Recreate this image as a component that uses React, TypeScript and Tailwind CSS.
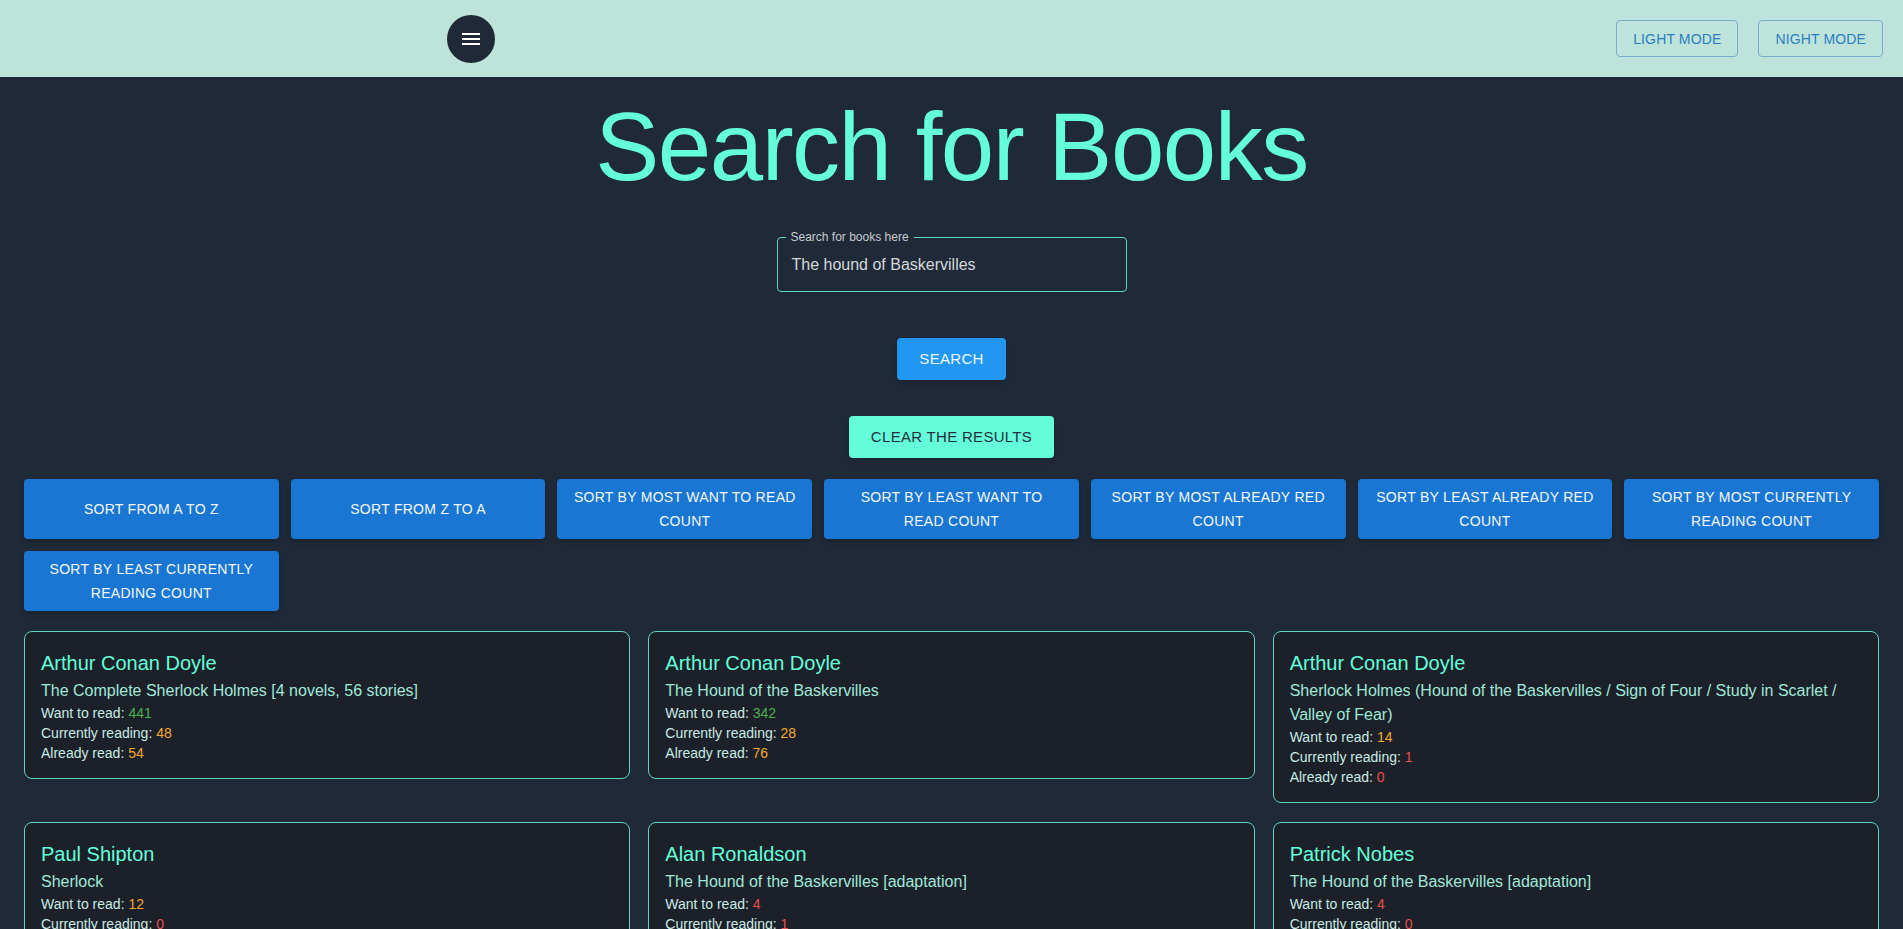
const books = [
  {
    author: "Arthur Conan Doyle",
    title: "The Complete Sherlock Holmes [4 novels, 56 stories]",
    want: 441,
    current: 48,
    read: 54
  },
  {
    author: "Arthur Conan Doyle",
    title: "The Hound of the Baskervilles",
    want: 342,
    current: 28,
    read: 76
  },
  {
    author: "Arthur Conan Doyle",
    title: "Sherlock Holmes (Hound of the Baskervilles / Sign of Four / Study in Scarlet / Valley of Fear)",
    want: 14,
    current: 1,
    read: 0
  },
  {
    author: "Paul Shipton",
    title: "Sherlock",
    want: 12,
    current: 0,
    read: 0
  },
  {
    author: "Alan Ronaldson",
    title: "The Hound of the Baskervilles [adaptation]",
    want: 4,
    current: 1,
    read: 0
  },
  {
    author: "Patrick Nobes",
    title: "The Hound of the Baskervilles [adaptation]",
    want: 4,
    current: 0,
    read: 0
  }
];

const sortOptions = [
  "Sort from A to Z",
  "Sort from Z to A",
  "Sort by most want to read count",
  "Sort by least want to read count",
  "Sort by most already red count",
  "Sort by least already red count",
  "Sort by most currently reading count",
  "Sort by least currently reading count"
];

const countColor = (n: number) => {
  if (n >= 100) return "text-[#4caf50]";
  if (n >= 10) return "text-[#f5a830]";
  return "text-[#e84f4f]";
};

const Stat = ({ label, value }: { label: string; value: number }) => (
  <div className="text-sm leading-5 text-[#c8ebe3]">
    {label}: <span className={countColor(value)}>{value}</span>
  </div>
);

const MenuIcon = () => (
  <svg viewBox="0 0 24 24" className="w-6 h-6" fill="#ffffff">
    <path d="M3 18h18v-2H3v2zm0-5h18v-2H3v2zm0-7v2h18V6H3z" />
  </svg>
);

export default function App() {
  return (
    <div className="min-h-screen bg-[#1f2937] font-['Liberation_Sans',Arial,sans-serif]">
      <header className="h-[77px] bg-[#bee3db] flex items-center pl-[447px] pr-5">
        <button className="w-12 h-12 rounded-full bg-[#1f2937] flex items-center justify-center">
          <MenuIcon />
        </button>
        <div className="ml-auto flex gap-5">
          <button className="h-[37px] px-4 border border-[#78aecb] rounded text-[#2a7fc0] text-sm uppercase tracking-[0.01em]">
            Light mode
          </button>
          <button className="h-[37px] px-4 border border-[#78aecb] rounded text-[#2a7fc0] text-sm uppercase tracking-[0.01em]">
            Night mode
          </button>
        </div>
      </header>

      <main className="pb-10">
        <h1 className="mt-[14px] text-center text-[96px] leading-[112px] font-light tracking-[-0.01562em] text-[#64ffda]">
          Search for Books
        </h1>

        <div className="mt-[34px] flex justify-center">
          <div className="relative w-[350px] h-[55px] border border-[#5cd6c4] rounded flex items-center px-[14px]">
            <span className="absolute left-[8px] -top-[8px] px-[5px] bg-[#1f2937] text-xs leading-[14px] text-[#c8ccd0]">
              Search for books here
            </span>
            <span className="text-base text-[#d5d8dc]">The hound of Baskervilles</span>
          </div>
        </div>

        <div className="mt-[46px] flex justify-center">
          <button className="h-[42px] px-[22px] rounded bg-[#2196f3] text-[15px] uppercase tracking-[0.02em] text-[#eef6ff] shadow-md">
            Search
          </button>
        </div>

        <div className="mt-9 flex justify-center">
          <button className="h-[42px] px-[22px] rounded bg-[#64ffda] text-[15px] uppercase tracking-[0.02em] text-[#23303c] shadow-md">
            Clear the results
          </button>
        </div>

        <div className="mt-[21px] px-6 grid grid-cols-7 gap-3">
          {sortOptions.map((option, index) => (
            <button
              key={index}
              className="min-h-[60px] px-[15px] py-[6px] rounded bg-[#1976d2] text-[#f4f8fc] text-sm leading-6 uppercase tracking-[0.02em] shadow-md"
            >
              {option}
            </button>
          ))}
        </div>

        <div className="mt-5 px-6 grid grid-cols-3 gap-x-[18px] gap-y-[19px] items-start">
          {books.map((book, index) => (
            <div
              key={index}
              className="bg-[#1b2029] border border-[#5fd4c2] rounded-lg px-4 py-[15px]"
            >
              <h3 className="text-xl leading-8 font-medium text-[#64ffda]">{book.author}</h3>
              <p className="text-base leading-6 text-[#a0e8d8]">{book.title}</p>
              <Stat label="Want to read" value={book.want} />
              <Stat label="Currently reading" value={book.current} />
              <Stat label="Already read" value={book.read} />
            </div>
          ))}
        </div>
      </main>
    </div>
  );
}
